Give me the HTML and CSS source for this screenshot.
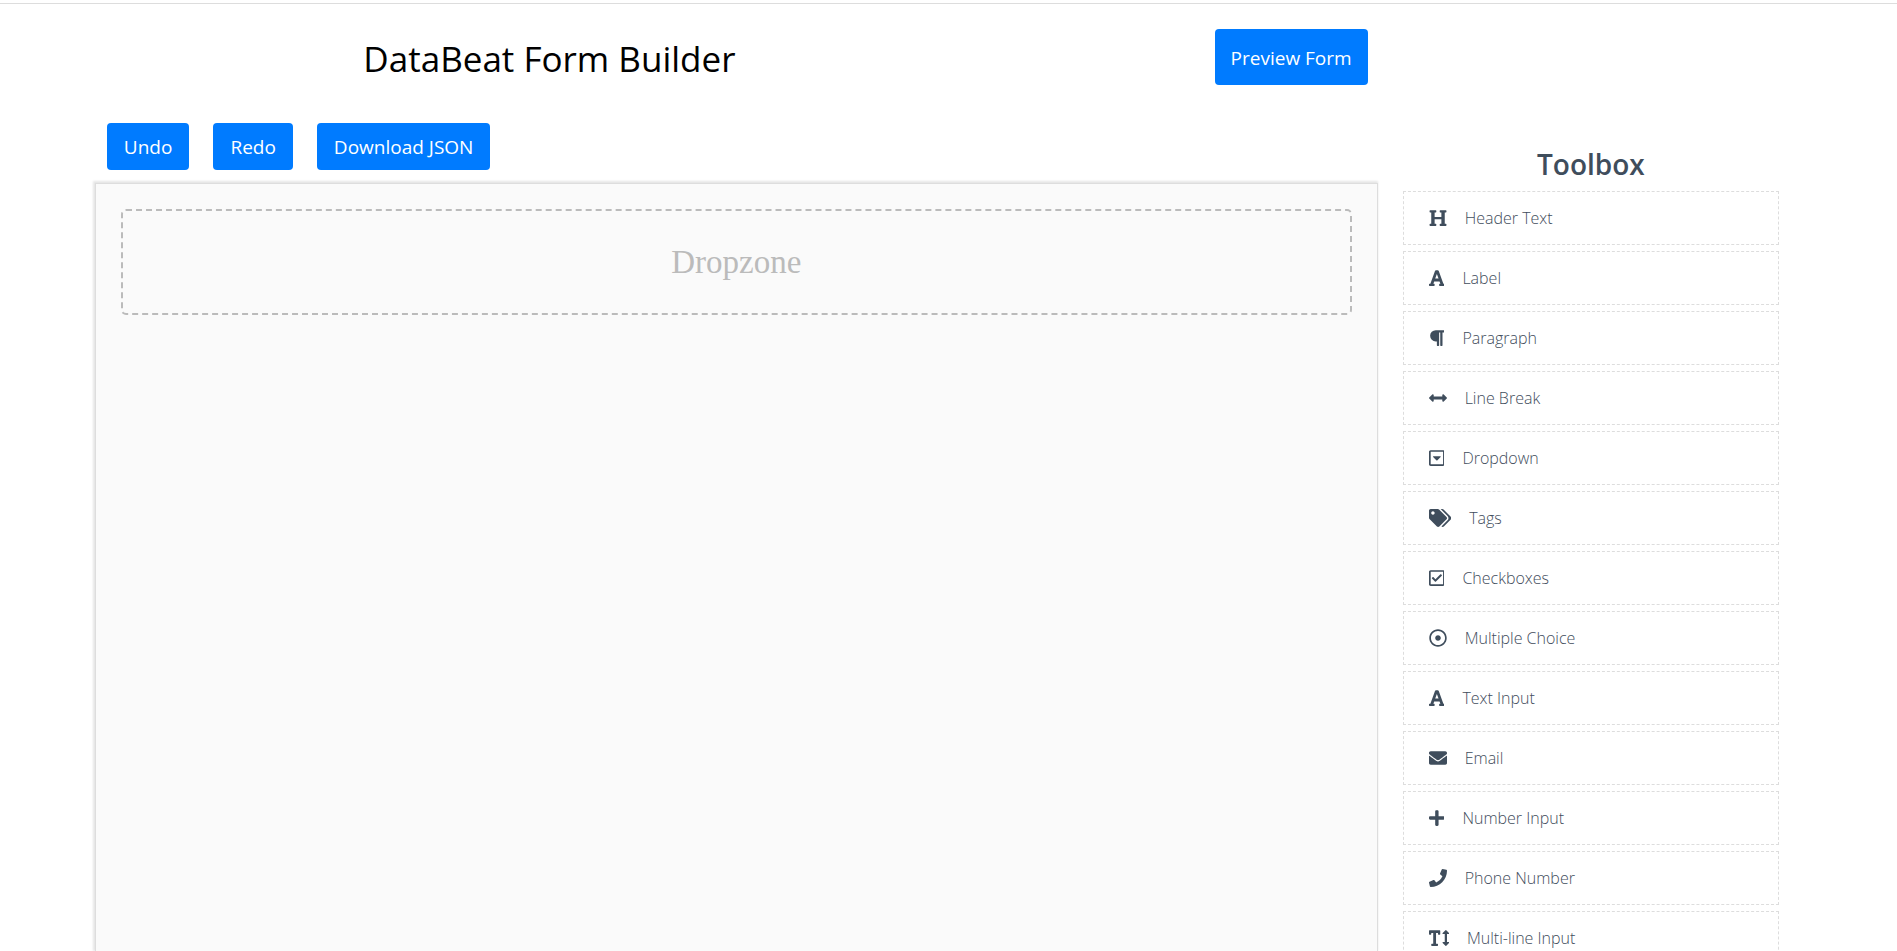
FILE: index.html
```html
<!DOCTYPE html>
<html lang="en">
<head>
<meta charset="utf-8">
<meta name="viewport" content="width=device-width, initial-scale=1">
<title>DataBeat Form Builder</title>
<link rel="stylesheet" href="styles.css">
</head>
<body>
<div class="app">
  <div class="topline"></div>
  <div class="container">
    <main class="builder">
      <header class="header">
        <h1 class="title">DataBeat Form Builder</h1>
        <button class="btn btn-large" type="button">Preview Form</button>
      </header>
      <div class="actions">
        <button class="btn" type="button">Undo</button>
        <button class="btn" type="button">Redo</button>
        <button class="btn" type="button">Download JSON</button>
      </div>
      <section class="canvas">
        <div class="dropzone">Dropzone</div>
      </section>
    </main>
    <aside class="toolbox">
      <h2 class="toolbox-title">Toolbox</h2>
      <ul class="tools">
        <li class="tool"><svg class="icon" viewBox="0 0 512 512" aria-hidden="true"><path d="M448 96v320h32a16 16 0 0 1 16 16v32a16 16 0 0 1-16 16H320a16 16 0 0 1-16-16v-32a16 16 0 0 1 16-16h32V288H160v128h32a16 16 0 0 1 16 16v32a16 16 0 0 1-16 16H32a16 16 0 0 1-16-16v-32a16 16 0 0 1 16-16h32V96H32a16 16 0 0 1-16-16V48a16 16 0 0 1 16-16h160a16 16 0 0 1 16 16v32a16 16 0 0 1-16 16h-32v128h192V96h-32a16 16 0 0 1-16-16V48a16 16 0 0 1 16-16h160a16 16 0 0 1 16 16v32a16 16 0 0 1-16 16z"/></svg><span>Header Text</span></li>
        <li class="tool"><svg class="icon" viewBox="0 0 448 512" aria-hidden="true"><path d="M432 416h-23.41L277.88 53.69A32 32 0 0 0 247.58 32h-47.16a32 32 0 0 0-30.3 21.69L39.41 416H16a16 16 0 0 0-16 16v32a16 16 0 0 0 16 16h128a16 16 0 0 0 16-16v-32a16 16 0 0 0-16-16h-19.58l23.3-64h152.56l23.3 64H304a16 16 0 0 0-16 16v32a16 16 0 0 0 16 16h128a16 16 0 0 0 16-16v-32a16 16 0 0 0-16-16zM176.85 272L224 142.51 271.15 272z"/></svg><span>Label</span></li>
        <li class="tool"><svg class="icon" viewBox="0 0 448 512" aria-hidden="true"><path d="M448 48v32a16 16 0 0 1-16 16h-48v368a16 16 0 0 1-16 16h-32a16 16 0 0 1-16-16V96h-32v368a16 16 0 0 1-16 16h-32a16 16 0 0 1-16-16V352h-32a160 160 0 0 1 0-320h240a16 16 0 0 1 16 16z"/></svg><span>Paragraph</span></li>
        <li class="tool"><svg class="icon" viewBox="0 0 512 512" aria-hidden="true"><path d="M377.941 169.941V216H134.059v-46.059c0-21.382-25.851-32.09-40.971-16.971L7.029 239.029c-9.373 9.373-9.373 24.568 0 33.941l86.059 86.059c15.119 15.119 40.971 4.411 40.971-16.971V296h243.882v46.059c0 21.382 25.851 32.09 40.971 16.971l86.059-86.059c9.373-9.373 9.373-24.568 0-33.941l-86.059-86.059c-15.119-15.12-40.971-4.412-40.971 16.97z"/></svg><span>Line Break</span></li>
        <li class="tool"><svg class="icon" viewBox="0 0 448 512" aria-hidden="true"><path d="M125.1 208h197.8c10.7 0 16.1 13 8.5 20.5l-98.9 98.3c-4.7 4.7-12.2 4.7-16.9 0l-98.9-98.3c-7.7-7.5-2.3-20.5 8.4-20.5zM448 80v352c0 26.5-21.5 48-48 48H48c-26.5 0-48-21.5-48-48V80c0-26.500 21.500-48 48-48h352c26.500 0 48 21.500 48 48zm-48 346V86c0-3.300-2.700-6-6-6H54c-3.300 0-6 2.700-6 6v340c0 3.300 2.700 6 6 6h340c3.300 0 6-2.700 6-6z"/></svg><span>Dropdown</span></li>
        <li class="tool"><svg class="icon" viewBox="0 0 640 512" aria-hidden="true"><path d="M497.941 225.941L286.059 14.059A48 48 0 0 0 252.118 0H48C21.490 0 0 21.490 0 48v204.118a48 48 0 0 0 14.059 33.941l211.882 211.882c18.744 18.745 49.136 18.746 67.882 0l204.118-204.118c18.745-18.745 18.745-49.137 0-67.882zM112 160c-26.510 0-48-21.490-48-48s21.490-48 48-48 48 21.490 48 48-21.490 48-48 48zm513.941 133.823L421.823 497.941c-18.745 18.745-49.137 18.745-67.882 0l-.36-.36L527.640 323.522c16.999-16.999 26.360-39.600 26.360-63.640s-9.362-46.641-26.360-63.640L331.397 0h48.721a48 48 0 0 1 33.941 14.059l211.882 211.882c18.745 18.745 18.745 49.137 0 67.882z"/></svg><span>Tags</span></li>
        <li class="tool"><svg class="icon" viewBox="0 0 448 512" aria-hidden="true"><path d="M400 32H48C21.490 32 0 53.490 0 80v352c0 26.510 21.490 48 48 48h352c26.510 0 48-21.490 48-48V80c0-26.510-21.490-48-48-48zm0 400H48V80h352v352zm-35.864-241.724L191.547 361.480c-4.705 4.667-12.303 4.637-16.970-.068l-90.781-91.516c-4.667-4.705-4.637-12.303.069-16.971l22.719-22.536c4.705-4.667 12.303-4.637 16.970.069l59.792 60.277 141.352-140.216c4.705-4.667 12.303-4.637 16.970.068l22.536 22.718c4.667 4.706 4.637 12.304-.068 16.971z"/></svg><span>Checkboxes</span></li>
        <li class="tool"><svg class="icon" viewBox="0 0 512 512" aria-hidden="true"><path d="M256 56c110.532 0 200 89.451 200 200 0 110.532-89.451 200-200 200-110.532 0-200-89.451-200-200 0-110.532 89.451-200 200-200m0-48C119.033 8 8 119.033 8 256s111.033 248 248 248 248-111.033 248-248S392.967 8 256 8zm0 168c-44.183 0-80 35.817-80 80s35.817 80 80 80 80-35.817 80-80-35.817-80-80-80z"/></svg><span>Multiple Choice</span></li>
        <li class="tool"><svg class="icon" viewBox="0 0 448 512" aria-hidden="true"><path d="M432 416h-23.41L277.88 53.69A32 32 0 0 0 247.58 32h-47.16a32 32 0 0 0-30.3 21.69L39.41 416H16a16 16 0 0 0-16 16v32a16 16 0 0 0 16 16h128a16 16 0 0 0 16-16v-32a16 16 0 0 0-16-16h-19.58l23.3-64h152.56l23.3 64H304a16 16 0 0 0-16 16v32a16 16 0 0 0 16 16h128a16 16 0 0 0 16-16v-32a16 16 0 0 0-16-16zM176.85 272L224 142.51 271.15 272z"/></svg><span>Text Input</span></li>
        <li class="tool"><svg class="icon" viewBox="0 0 512 512" aria-hidden="true"><path d="M502.3 190.8c3.9-3.1 9.7-.2 9.7 4.700V400c0 26.500-21.500 48-48 48H48c-26.500 0-48-21.500-48-48V195.600c0-5 5.700-7.800 9.700-4.700 22.400 17.400 52.100 39.500 154.100 113.600 21.100 15.400 56.700 47.800 92.200 47.600 35.700.3 72-32.800 92.300-47.600 102-74.100 131.600-96.300 154-113.700zM256 320c23.200.4 56.600-29.200 73.400-41.400 132.700-96.300 142.800-104.700 173.400-128.700 5.800-4.500 9.200-11.500 9.200-18.900v-19c0-26.500-21.500-48-48-48H48c-26.500 0-48 21.500-48 48v19c0 7.400 3.400 14.300 9.200 18.900 30.600 23.900 40.700 32.400 173.400 128.700 16.800 12.200 50.200 41.800 73.400 41.400z"/></svg><span>Email</span></li>
        <li class="tool"><svg class="icon" viewBox="0 0 448 512" aria-hidden="true"><path d="M416 208H272V64c0-17.670-14.330-32-32-32h-32c-17.670 0-32 14.330-32 32v144H32c-17.670 0-32 14.330-32 32v32c0 17.670 14.330 32 32 32h144v144c0 17.670 14.330 32 32 32h32c17.670 0 32-14.330 32-32V304h144c17.670 0 32-14.330 32-32v-32c0-17.670-14.330-32-32-32z"/></svg><span>Number Input</span></li>
        <li class="tool"><svg class="icon" viewBox="0 0 512 512" aria-hidden="true"><path d="M493.400 24.600l-104-24c-11.300-2.600-22.900 3.300-27.500 13.900l-48 112c-4.200 9.800-1.400 21.300 6.900 28l60.600 49.600c-36 76.700-98.900 140.500-177.200 177.200l-49.600-60.600c-6.800-8.300-18.200-11.100-28-6.900l-112 48C3.900 366.500-2 378.100.6 389.400l24 104C27.100 504.200 36.700 512 48 512c256.100 0 464-207.500 464-464 0-11.200-7.700-20.900-18.600-23.400z"/></svg><span>Phone Number</span></li>
        <li class="tool"><svg class="icon" viewBox="0 0 576 512" aria-hidden="true"><path d="M304 32H16A16 16 0 0 0 0 48v96a16 16 0 0 0 16 16h32a16 16 0 0 0 16-16v-32h56v304H80a16 16 0 0 0-16 16v32a16 16 0 0 0 16 16h160a16 16 0 0 0 16-16v-32a16 16 0 0 0-16-16h-40V112h56v32a16 16 0 0 0 16 16h32a16 16 0 0 0 16-16V48a16 16 0 0 0-16-16zm256 336h-48V144h48c14.310 0 21.330-17.310 11.310-27.310l-80-80a16 16 0 0 0-22.620 0l-80 80C379.360 126 384.360 144 400 144h48v224h-48c-14.310 0-21.320 17.310-11.310 27.310l80 80a16 16 0 0 0 22.620 0l80-80C580.640 386 575.640 368 560 368z"/></svg><span>Multi-line Input</span></li>
      </ul>
    </aside>
  </div>
</div>
</body>
</html>
```
FILE: styles.css
```css
* {
  box-sizing: border-box;
}

body {
  margin: 0;
  background: #fff;
  color: #000;
  font-family: "Segoe UI", "Open Sans", "Noto Sans", sans-serif;
}

.app {
  display: flex;
  flex-direction: column;
  height: 100vh;
  overflow: hidden;
}

.topline {
  flex: none;
  height: 4px;
  border-bottom: 1px solid #ddd;
}

.container {
  display: flex;
  flex: 1;
  gap: 25px;
  min-height: 0;
  padding: 0 5%;
}

.builder {
  display: flex;
  flex: 1;
  flex-direction: column;
  min-width: 0;
}

.header {
  display: grid;
  grid-template-columns: 5fr 2fr;
  align-items: center;
  padding: 25px 10px 38px 0;
}

.title {
  margin: 0;
  padding-top: 4px;
  font-size: 35px;
  font-weight: 400;
  line-height: 52px;
  text-align: center;
}

.actions {
  display: flex;
  gap: 24px;
  padding: 0 12px 13px;
}

.btn {
  padding: 2px 17px 0;
  border: 0;
  border-radius: 4px;
  background: #007bff;
  color: #fff;
  font-family: inherit;
  font-size: 19px;
  line-height: 45px;
  cursor: pointer;
}

.btn-large {
  justify-self: end;
  padding: 2px 16px 0;
  line-height: 54px;
}

.canvas {
  flex: 1;
  padding: 25px;
  border: 1px solid #ddd;
  border-bottom: 0;
  background: #fafafa;
  box-shadow: -1px -1px 2px 1px rgba(0, 0, 0, 0.1);
}

.dropzone {
  border: 2px dashed #bbb;
  border-radius: 5px;
  color: #bbb;
  font-family: "Liberation Serif", serif;
  font-size: 33px;
  line-height: 102px;
  text-align: center;
}

.toolbox {
  flex: none;
  width: 23.4%;
  padding: 140px 23px 0 0;
  color: #3f4d5c;
}

.toolbox-title {
  margin: 0 0 6px;
  font-size: 28px;
  font-weight: 600;
  line-height: 41px;
  text-align: center;
}

.tools {
  display: flex;
  flex-direction: column;
  gap: 6px;
  margin: 0;
  padding: 0;
  list-style: none;
}

.tool {
  display: flex;
  align-items: center;
  gap: 18px;
  padding: 0 25px;
  border: 1px dashed #ddd;
  font-size: 16px;
  font-weight: 300;
  line-height: 52px;
  cursor: grab;
}

.icon {
  flex: none;
  height: 18px;
  fill: currentColor;
}
```
